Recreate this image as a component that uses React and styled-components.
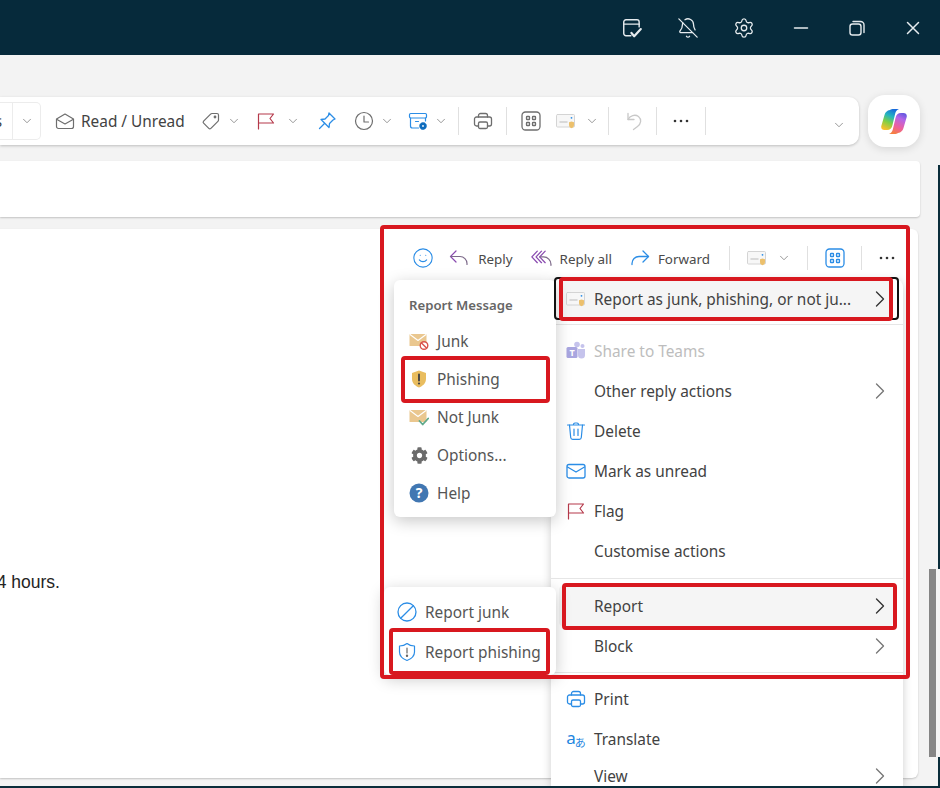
import { createGlobalStyle, styled } from "styled-components";
import { BellOff, ChevronDown, ChevronRight, Settings, Smile } from "lucide-react";
import { FaCog } from "react-icons/fa";

const GlobalStyle = createGlobalStyle`
  html, body { margin: 0; padding: 0; }
  body { font-family: "Noto Sans", "Open Sans", sans-serif; color: #424242; }
`;

const Page = styled.div`
  position: relative;
  width: 940px;
  height: 788px;
  overflow: hidden;
  background: #f3f3f3;
  border-bottom: 2px solid #0a2d3a;
  box-sizing: border-box;
`;

const TitleBar = styled.header`
  height: 55px;
  background: #062a3b;
  display: flex;
  align-items: center;
  justify-content: flex-end;
  padding-right: 16px;
  color: #e6ebee;
`;

const TitleBtn = styled.div`
  width: 22px;
  height: 22px;
  margin-left: ${p => p.$ml || 0}px;
  display: flex;
  align-items: center;
  justify-content: center;
`;

const ToolRow = styled.div`
  display: flex;
  align-items: center;
  height: 52px;
  margin-top: 40px;
`;

const Toolbar = styled.div`
  width: 859px;
  height: 48px;
  display: flex;
  align-items: center;
  background: #fff;
  border-radius: 0 10px 10px 0;
  box-shadow: 0 1px 3px rgba(0, 0, 0, 0.22);
  font-size: 15.4px;
`;

const SplitBox = styled.div`
  width: 40px;
  height: 36px;
  display: flex;
  align-items: center;
  border: 1px solid #ececec;
  border-left: 0;
  border-radius: 0 5px 5px 0;
  overflow: hidden;
`;

const SplitLabel = styled.span`
  width: 12px;
  border-right: 1px solid #ececec;
  height: 100%;
  display: flex;
  align-items: center;
  justify-content: flex-end;
  padding-right: 10px;
  margin-left: -10px;
  flex: none;
  box-sizing: content-box;
`;

const Slot = styled.span`
  display: inline-flex;
  align-items: center;
  justify-content: center;
  flex: none;
  margin-left: ${p => p.$ml || 0}px;
  margin-top: ${p => p.$mt || 0}px;
`;

const ToolText = styled.span`
  margin-left: 6px;
  margin-top: 1px;
  white-space: nowrap;
`;

const Sep = styled.span`
  width: 1px;
  height: ${p => p.$h || 28}px;
  background: #e0e0e0;
  flex: none;
  margin-left: ${p => p.$ml || 0}px;
`;

const EndChevron = styled(Slot)`
  margin-left: auto;
  margin-right: 13px;
  margin-top: 8px;
`;

const CopilotBtn = styled.div`
  width: 52px;
  height: 52px;
  margin-left: 9px;
  background: #fff;
  border-radius: 17px;
  display: flex;
  align-items: center;
  justify-content: center;
  box-shadow: 0 2px 8px rgba(0, 0, 0, 0.12);
`;

const SubjectBar = styled.div`
  width: 920px;
  height: 56px;
  margin-top: 14px;
  background: #fff;
  border-radius: 0 4px 4px 0;
  box-shadow: 0 1px 2px rgba(0, 0, 0, 0.2);
`;

const MessageCard = styled.article`
  width: 918px;
  height: 549px;
  margin-top: 12px;
  padding-top: 16px;
  box-sizing: border-box;
  background: #fff;
  border-radius: 0 6px 6px 0;
  box-shadow: 0 1px 2px rgba(0, 0, 0, 0.2);
  overflow: hidden;
`;

const ActionBar = styled.div`
  height: 26px;
  display: flex;
  align-items: center;
  justify-content: flex-end;
  padding-right: 21px;
  font-size: 13.4px;
  color: #4a4a4a;
`;

const ActionText = styled.span`
  margin-left: ${p => p.$ml || 8}px;
  margin-top: 1px;
  white-space: nowrap;
`;

const BodyText = styled.p`
  margin: 301px 0 0 -13px;
  height: 20px;
  line-height: 20px;
  font-family: "Liberation Sans", Arial, sans-serif;
  font-size: 17.5px;
  color: #242424;
`;

const Menu = styled.div`
  position: absolute;
  left: 551px;
  top: 279px;
  width: 352px;
  bottom: 0;
  background: #fff;
  border-radius: 8px 8px 0 0;
  box-shadow: 0 2px 10px rgba(0, 0, 0, 0.2);
  overflow: hidden;
`;

const MenuRow = styled.div`
  height: ${p => p.$h || 40}px;
  margin: 0 10px 0 8px;
  padding: 0 0 0 6px;
  display: flex;
  align-items: center;
  font-size: 15.4px;
  color: ${p => (p.$disabled ? "#bdbdbd" : "#424242")};
  background: ${p => (p.$active ? "#f5f5f5" : "transparent")};
  border-radius: 4px;
`;

const RowIcon = styled.span`
  width: 21px;
  height: 21px;
  margin-right: 8px;
  flex: none;
  display: inline-flex;
  align-items: center;
  justify-content: center;
`;

const RowLabel = styled.span`
  flex: 1;
  white-space: nowrap;
`;

const MoreSlot = styled.span`
  display: inline-flex;
  margin-right: -1px;
`;

const MenuRule = styled.div`
  height: 1px;
  background: #e6e6e6;
  margin: ${p => p.$before || 0}px 0 ${p => p.$after || 0}px;
`;

const TranslateGlyph = styled.span`
  color: #1f86e0;
  font-size: 17px;
  line-height: 1;
  letter-spacing: -1px;
  margin-top: -3px;
  small {
    font-family: "Noto Sans CJK JP", sans-serif;
    font-size: 11px;
    position: relative;
    top: 3px;
  }
`;

const Flyout = styled.div`
  position: absolute;
  left: ${p => p.$left}px;
  top: ${p => p.$top}px;
  width: ${p => p.$width}px;
  height: ${p => p.$height}px;
  box-sizing: border-box;
  padding-top: ${p => p.$pad}px;
  background: #fff;
  border-radius: 6px;
  box-shadow: 0 4px 16px rgba(0, 0, 0, 0.22);
`;

const FlyoutTitle = styled.div`
  height: 42px;
  box-sizing: border-box;
  padding: 8px 0 0 15px;
  display: flex;
  align-items: center;
  font-size: 13.2px;
  font-weight: 600;
  color: #666;
`;

const FlyoutRow = styled.div`
  height: ${p => p.$h}px;
  padding-left: ${p => p.$pad}px;
  display: flex;
  align-items: center;
  font-size: 15.4px;
  white-space: nowrap;
  color: #555;
  & > span:first-child {
    width: 20px;
    margin-right: 8px;
    display: inline-flex;
    align-items: center;
    justify-content: center;
  }
`;

const Marker = styled.div`
  position: absolute;
  left: ${p => p.$l}px;
  top: ${p => p.$t}px;
  width: ${p => p.$w}px;
  height: ${p => p.$h}px;
  box-sizing: border-box;
  border: ${p => p.$b || 4}px solid ${p => p.$color || "#d8181f"};
  border-radius: 4px;
  pointer-events: none;
`;

const ScrollThumb = styled.div`
  position: absolute;
  left: 929px;
  top: 569px;
  width: 7px;
  height: 188px;
  background: #858585;
`;

const EdgeStrip = styled.div`
  position: absolute;
  right: 0;
  top: ${p => p.$top}px;
  height: ${p => p.$height}px;
  width: 2px;
  background: #0a2d3a;
`;

const GREY = "#6e6e6e";
const BLUE = "#2b8de6";
const RED = "#b5394a";
const PURPLE = "#8a4bb0";

const Svg = ({ size = 20, children, ...rest }) => (
  <svg width={size} height={size} viewBox="0 0 20 20" fill="none" strokeLinecap="round" strokeLinejoin="round" {...rest}>
    {children}
  </svg>
);

const Chev = () => <ChevronDown size={14} strokeWidth={1.3} color="#777" />;

const CalendarCheck = () => (
  <Svg size={22} stroke="currentColor" strokeWidth="1.3">
    <path d="M9 17H4.500A2 2 0 0 1 2.500 15V4.500a2 2 0 0 1 2-2h10a2 2 0 0 1 2 2V9" />
    <path d="M2.500 6.500h14" />
    <path d="M9.500 14.500l2.500 3 6-6.500" strokeWidth="2" />
  </Svg>
);

const RestoreIcon = () => (
  <Svg size={20} stroke="currentColor" strokeWidth="1.400">
    <rect x="3" y="6" width="11" height="11" rx="2.500" />
    <path d="M6 3.500h7.500A3.500 3.500 0 0 1 17 7v7.500" />
  </Svg>
);

const MinusIcon = () => (
  <Svg size={20} stroke="currentColor" strokeWidth="1.500"><path d="M3.500 10h13" /></Svg>
);

const CloseIcon = () => (
  <Svg size={20} stroke="currentColor" strokeWidth="1.500"><path d="M4.500 4.500l11 11M15.500 4.500l-11 11" /></Svg>
);

const MailOpenIcon = () => (
  <Svg stroke={GREY} strokeWidth="1.200">
    <path d="M1.500 8L10 3l8.500 5v7.500a2 2 0 0 1-2 2h-13a2 2 0 0 1-2-2z" />
    <path d="M2 8.500l8 4.500 8-4.500" />
  </Svg>
);

const TagIcon = () => (
  <Svg stroke={GREY} strokeWidth="1.200">
    <path d="M11 2.500h5A1.500 1.500 0 0 1 17.500 4v5a2 2 0 0 1-.6 1.400l-7 7a1.500 1.500 0 0 1-2.100 0l-5.200-5.200a1.500 1.500 0 0 1 0-2.100l7-7A2 2 0 0 1 11 2.500z" />
    <circle cx="14" cy="6" r="0.800" fill={GREY} />
  </Svg>
);

const FlagIcon = ({ size }) => (
  <Svg size={size} stroke={RED} strokeWidth="1.200">
    <path d="M2.500 18V3h15l-3.500 4.500 3.500 4.500h-15" />
  </Svg>
);

const PinIcon = () => (
  <Svg stroke={BLUE} strokeWidth="1.300">
    <path d="M12 2l6 6-2 1-3.500 3.500-.5 4L4 8.500l4-.5L11.500 4.500z" />
    <path d="M7.500 12.500l-5 5" />
  </Svg>
);

const ClockIcon = () => (
  <Svg stroke={GREY} strokeWidth="1.200">
    <circle cx="10" cy="10" r="8.500" />
    <path d="M10 5v6h4.500" />
  </Svg>
);

const ArchiveIcon = () => (
  <Svg stroke={BLUE} strokeWidth="1.200">
    <rect x="1.500" y="2.500" width="17" height="4.500" rx="1.200" />
    <path d="M2.500 7v8a2 2 0 0 0 2 2h6M17.500 7v3M7.500 10.500h3" />
    <circle cx="15" cy="15" r="3" fill="#0f6cbd" stroke="#0f6cbd" strokeDasharray="1.500 0.900" strokeWidth="1.500" />
    <circle cx="15" cy="15" r="0.900" fill="#fff" stroke="none" />
  </Svg>
);

const PrintIcon = ({ color = GREY }) => (
  <Svg stroke={color} strokeWidth="1.300">
    <path d="M5.500 6V4.500a2 2 0 0 1 2-2h5a2 2 0 0 1 2 2V6" />
    <path d="M5.500 15H3.500a2 2 0 0 1-2-2V8a2 2 0 0 1 2-2h13a2 2 0 0 1 2 2v5a2 2 0 0 1-2 2h-2" />
    <rect x="5.500" y="11" width="9" height="6.500" rx="1.500" />
  </Svg>
);

const AppsIcon = ({ color = GREY }) => (
  <Svg stroke={color} strokeWidth="1.300">
    <rect x="1" y="1" width="18" height="18" rx="3.500" />
    <rect x="5.500" y="5.500" width="3" height="3" rx="0.600" />
    <rect x="11.500" y="5.500" width="3" height="3" rx="0.600" />
    <rect x="5.500" y="11.500" width="3" height="3" rx="0.600" />
    <rect x="11.500" y="11.500" width="3" height="3" rx="0.600" />
  </Svg>
);

const JunkReportIcon = () => (
  <Svg>
    <rect x="0.500" y="3.500" width="18" height="12.500" rx="1" fill="#f7f7f7" stroke="#d4d4d4" />
    <path d="M4 11h7" stroke="#d0d0d0" strokeWidth="1.500" />
    <circle cx="15.500" cy="6.800" r="0.900" fill="#2b8de6" />
    <path d="M15.500 10.500l2.500.8v2.700c0 1.800-1.200 2.800-2.500 3.300-1.300-.5-2.500-1.500-2.500-3.300v-2.700z" fill="#ecc06c" />
  </Svg>
);

const UndoIcon = () => (
  <Svg stroke="#c8c8c8" strokeWidth="1.300">
    <path d="M4 2.500v6h6" />
    <path d="M4 8.500C6 4.500 11 3 14.500 5.500c3.500 3 2.500 7.500-1 10l-4 3" />
  </Svg>
);

const DotsIcon = ({ size = 20 }) => (
  <Svg size={size} fill="#333">
    <circle cx="4" cy="10" r="1.300" />
    <circle cx="10" cy="10" r="1.300" />
    <circle cx="16" cy="10" r="1.300" />
  </Svg>
);

const ReplyIcon = () => (
  <Svg stroke={PURPLE} strokeWidth="1.200">
    <path d="M7 3L1.500 8.500 7 14" />
    <path d="M1.500 8.500H11a7 7 0 0 1 7 7v1" stroke="#7d6a8a" />
  </Svg>
);

const ReplyAllIcon = () => (
  <Svg size={21} stroke={PURPLE} strokeWidth="1.200">
    <path d="M6 3L.8 8.500 6 14" />
    <path d="M10 3L4.800 8.500 10 14" />
    <path d="M13.500 3L8.300 8.500 13.500 14" />
    <path d="M8.300 8.500H12a7 7 0 0 1 7 7v1" stroke="#7d6a8a" />
  </Svg>
);

const ForwardIcon = () => (
  <Svg stroke={BLUE} strokeWidth="1.300">
    <path d="M13 3l5.500 5.500L13 14" />
    <path d="M18.500 8.500H9a7 7 0 0 0-7 7v1" />
  </Svg>
);

const TeamsIcon = () => (
  <Svg>
    <circle cx="11" cy="3.500" r="2.800" fill="#c5c3ec" />
    <circle cx="16.500" cy="5" r="2" fill="#c5c3ec" />
    <path d="M12 8h7v6a3.500 3.500 0 0 1-7 0z" fill="#c5c3ec" />
    <rect x="0.500" y="6" width="11" height="11" rx="1.500" fill="#a9a6e0" />
    <text x="6" y="15" textAnchor="middle" fontSize="9" fontWeight="700" fill="#fff" fontFamily="Noto Sans, sans-serif">T</text>
  </Svg>
);

const TrashIcon = () => (
  <Svg stroke={BLUE} strokeWidth="1.200">
    <path d="M1.500 4h17M7.500 4V3a2 2 0 0 1 2-1h1a2 2 0 0 1 2 1v1" />
    <path d="M3.500 4l1.200 12.500a2 2 0 0 0 2 1.800h6.600a2 2 0 0 0 2-1.800L16.500 4" />
    <path d="M8 8v6.500M12 8v6.500" />
  </Svg>
);

const MailIcon = () => (
  <Svg stroke={BLUE} strokeWidth="1.300">
    <rect x="1" y="3.500" width="18" height="13.500" rx="2" />
    <path d="M1.500 6l8.500 5 8.500-5" />
  </Svg>
);

const TranslateIcon = () => (
  <TranslateGlyph>a<small>あ</small></TranslateGlyph>
);

const SandEnvelope = ({ children }) => (
  <Svg>
    <rect x="0.500" y="3" width="17" height="12" rx="0.500" fill="#eac78f" />
    <path d="M1 3.500l8 6 8-6" stroke="#fff" strokeWidth="1.100" />
    {children}
  </Svg>
);

const JunkIcon = () => (
  <SandEnvelope>
    <circle cx="15" cy="14.500" r="3.800" fill="#fff" stroke="#d9534a" strokeWidth="1.400" />
    <path d="M12.500 12l5 5" stroke="#d9534a" strokeWidth="1.400" />
  </SandEnvelope>
);

const NotJunkIcon = () => (
  <SandEnvelope>
    <path d="M10.500 14l3.200 3.500 5.500-6" stroke="#5fa98b" strokeWidth="1.800" />
  </SandEnvelope>
);

const PhishShieldIcon = () => (
  <Svg>
    <path d="M10 1.500l7 2.500v6c0 4.500-3.500 7-7 8.500-3.500-1.500-7-4-7-8.500V4z" fill="#e9bd5f" />
    <path d="M10 5.500v6" stroke="#444" strokeWidth="1.900" />
    <circle cx="10" cy="14.500" r="1.100" fill="#444" />
  </Svg>
);

const HelpIcon = () => (
  <Svg>
    <circle cx="10" cy="10" r="9.500" fill="#4177b2" />
    <text x="10" y="15" textAnchor="middle" fontSize="14" fontWeight="700" fill="#fff" fontFamily="Noto Sans, sans-serif">?</text>
  </Svg>
);

const BanIcon = () => (
  <Svg stroke={BLUE} strokeWidth="1.300">
    <circle cx="10" cy="10" r="9" />
    <path d="M16.300 3.700L3.700 16.300" />
  </Svg>
);

const ShieldIcon = () => (
  <Svg stroke={BLUE} strokeWidth="1.200">
    <path d="M10 1.500c2 1.700 4.500 2.500 7.500 2.500v6c0 4.500-3.500 7-7.500 8.500-4-1.500-7.500-4-7.500-8.500V4c3 0 5.500-.8 7.500-2.500z" />
    <path d="M10 6v5" stroke="#666" />
    <circle cx="10" cy="13.800" r="0.600" fill="#666" stroke="#666" />
  </Svg>
);

const copilotBlob = "M9 1C10 .3 11 0 12.500 0H18c-2.200.6-3.200 2.500-3.800 4.500L11.500 16c-.7 3.500-2.500 5-5.500 5H3.500C1.200 21-.2 19.400.3 17L3.500 6C4.300 3.200 6 1.500 9 1z";

const CopilotLogo = () => (
  <svg width="26" height="25" viewBox="0 0 26 25">
    <defs>
      <linearGradient id="copLeft" x1="0.700" y1="0" x2="0.300" y2="1">
        <stop offset="0" stopColor="#1668dc" />
        <stop offset="0.350" stopColor="#24b5c0" />
        <stop offset="0.650" stopColor="#7fcf45" />
        <stop offset="1" stopColor="#f8c02c" />
      </linearGradient>
      <linearGradient id="copRight" x1="0.700" y1="0" x2="0.300" y2="1">
        <stop offset="0" stopColor="#f5803c" />
        <stop offset="0.350" stopColor="#ee5f9c" />
        <stop offset="0.750" stopColor="#b565e8" />
        <stop offset="1" stopColor="#6a5ae0" />
      </linearGradient>
    </defs>
    <path d={copilotBlob} fill="url(#copRight)" transform="rotate(180 13 12.500)" />
    <path d={copilotBlob} fill="url(#copLeft)" />
  </svg>
);

const menuTop = [
  { icon: <TeamsIcon />, label: "Share to Teams", disabled: true },
  { label: "Other reply actions", more: true },
  { icon: <TrashIcon />, label: "Delete" },
  { icon: <MailIcon />, label: "Mark as unread" },
  { icon: <FlagIcon />, label: "Flag" },
  { label: "Customise actions" },
];

const messageOptions = [
  { icon: <JunkIcon />, label: "Junk" },
  { icon: <PhishShieldIcon />, label: "Phishing" },
  { icon: <NotJunkIcon />, label: "Not Junk" },
  { icon: <FaCog size={17} color="#6b6b6b" />, label: "Options..." },
  { icon: <HelpIcon />, label: "Help" },
];

const markers = [
  { l: 380, t: 225, w: 530, h: 454 },
  { l: 559, t: 277, w: 334, h: 44 },
  { l: 401, t: 356, w: 149, h: 47 },
  { l: 562, t: 583, w: 335, h: 47 },
  { l: 389, t: 628, w: 161, h: 47 },
];

const More = ({ dark }) => (
  <MoreSlot>
    <ChevronRight size={28} strokeWidth={1.15} color={dark ? "#333" : "#777"} />
  </MoreSlot>
);

function Row({ icon, label, more, dark, ...rest }) {
  return (
    <MenuRow {...rest}>
      <RowIcon>{icon}</RowIcon>
      <RowLabel>{label}</RowLabel>
      {more && <More dark={dark} />}
    </MenuRow>
  );
}

export default function App() {
  return (
    <Page>
      <GlobalStyle />

      <TitleBar>
        <TitleBtn><CalendarCheck /></TitleBtn>
        <TitleBtn $ml={34}><BellOff size={22} strokeWidth={1.4} /></TitleBtn>
        <TitleBtn $ml={34}><Settings size={22} strokeWidth={1.4} /></TitleBtn>
        <TitleBtn $ml={35}><MinusIcon /></TitleBtn>
        <TitleBtn $ml={34}><RestoreIcon /></TitleBtn>
        <TitleBtn $ml={34}><CloseIcon /></TitleBtn>
      </TitleBar>

      <ToolRow>
        <Toolbar>
          <SplitBox>
            <SplitLabel>s</SplitLabel>
            <Slot $ml={7}><Chev /></Slot>
          </SplitBox>
          <Slot $ml={14}><MailOpenIcon /></Slot>
          <ToolText>Read / Unread</ToolText>
          <Slot $ml={16}><TagIcon /></Slot>
          <Slot $ml={6}><Chev /></Slot>
          <Slot $ml={15}><FlagIcon /></Slot>
          <Slot $ml={10}><Chev /></Slot>
          <Slot $ml={17}><PinIcon /></Slot>
          <Slot $ml={17}><ClockIcon /></Slot>
          <Slot $ml={6}><Chev /></Slot>
          <Slot $ml={14}><ArchiveIcon /></Slot>
          <Slot $ml={6}><Chev /></Slot>
          <Sep $ml={10} />
          <Slot $ml={14}><PrintIcon /></Slot>
          <Sep $ml={13} />
          <Slot $ml={14}><AppsIcon /></Slot>
          <Slot $ml={15}><JunkReportIcon /></Slot>
          <Slot $ml={9}><Chev /></Slot>
          <Sep $ml={9} />
          <Slot $ml={15}><UndoIcon /></Slot>
          <Sep $ml={12} />
          <Slot $ml={14}><DotsIcon /></Slot>
          <Sep $ml={14} />
          <EndChevron><Chev /></EndChevron>
        </Toolbar>
        <CopilotBtn><CopilotLogo /></CopilotBtn>
      </ToolRow>

      <SubjectBar />

      <MessageCard>
        <ActionBar>
          <Slot><Smile size={22} strokeWidth={1.2} color={BLUE} /></Slot>
          <Slot $ml={15}><ReplyIcon /></Slot>
          <ActionText $ml={9}>Reply</ActionText>
          <Slot $ml={18}><ReplyAllIcon /></Slot>
          <ActionText>Reply all</ActionText>
          <Slot $ml={18}><ForwardIcon /></Slot>
          <ActionText>Forward</ActionText>
          <Sep $ml={19} $h={24} />
          <Slot $ml={17}><JunkReportIcon /></Slot>
          <Slot $ml={10}><Chev /></Slot>
          <Sep $ml={16} $h={24} />
          <Slot $ml={17}><AppsIcon color={BLUE} /></Slot>
          <Sep $ml={16} $h={24} />
          <Slot $ml={15}><DotsIcon /></Slot>
        </ActionBar>
        <BodyText>24 hours.</BodyText>
      </MessageCard>

      <ScrollThumb />
      <EdgeStrip $top={165} $height={404} />
      <EdgeStrip $top={757} $height={31} />

      <Menu>
        <Row $h={40} $active more dark icon={<JunkReportIcon />} label="Report as junk, phishing, or not ju..." />
        <MenuRule $before={5} $after={6} />
        {menuTop.map(item => (
          <Row key={item.label} icon={item.icon} label={item.label} more={item.more} $disabled={item.disabled} />
        ))}
        <MenuRule $before={7} $after={7} />
        <Row $active more dark label="Report" />
        <Row more label="Block" />
        <MenuRule $before={6} $after={6} />
        <Row icon={<PrintIcon color={BLUE} />} label="Print" />
        <Row icon={<TranslateIcon />} label="Translate" />
        <Row $h={34} more label="View" />
      </Menu>

      <Flyout $left={394} $top={280} $width={162} $height={237} $pad={0}>
        <FlyoutTitle>Report Message</FlyoutTitle>
        {messageOptions.map(item => (
          <FlyoutRow key={item.label} $h={38} $pad={15}>
            <span>{item.icon}</span>
            {item.label}
          </FlyoutRow>
        ))}
      </Flyout>

      <Flyout $left={384} $top={587} $width={172} $height={88} $pad={5}>
        <FlyoutRow $h={40} $pad={13}>
          <span><BanIcon /></span>
          Report junk
        </FlyoutRow>
        <FlyoutRow $h={40} $pad={13}>
          <span><ShieldIcon /></span>
          Report phishing
        </FlyoutRow>
      </Flyout>

      <Marker $l={554} $t={277} $w={345} $h={43} $b={2} $color="#111" />
      {markers.map(m => (
        <Marker key={`${m.l}-${m.t}`} $l={m.l} $t={m.t} $w={m.w} $h={m.h} />
      ))}
    </Page>
  );
}
